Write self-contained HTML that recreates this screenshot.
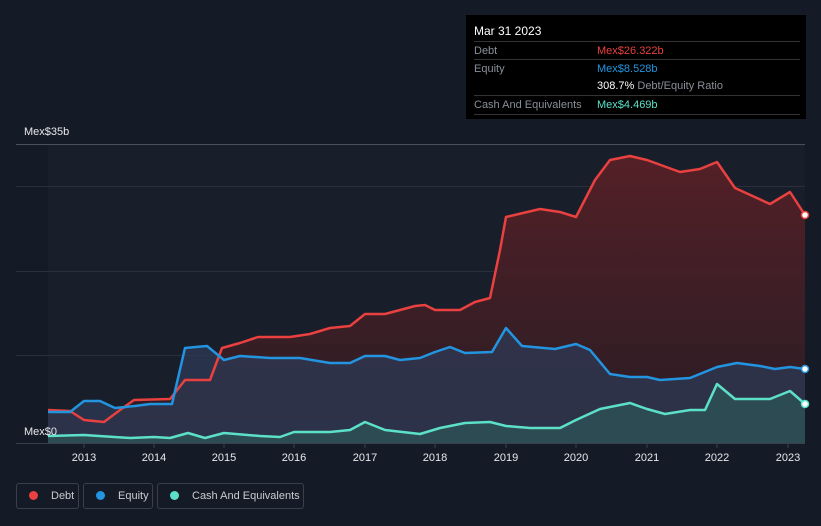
<!DOCTYPE html>
<html><head><meta charset="utf-8"><style>
html,body{margin:0;width:821px;height:526px;background:#151b26;font-family:"Liberation Sans",sans-serif;overflow:hidden;position:relative}
.tt{position:absolute;left:466px;top:15px;width:340px;height:104px;background:#000;color:#fff;font-size:11px}
.tt .r{position:absolute;left:8px;right:6px;border-top:1px solid #333;height:18px;line-height:18px;color:#8a8f98}
.leg{position:absolute;top:483px;height:26px;border:1px solid #3a404b;border-radius:3px;color:#c9ccd1;font-size:11px;line-height:24px;box-sizing:border-box;white-space:nowrap}
.leg i{display:inline-block;width:9px;height:9px;border-radius:50%;margin:0 13px 0 12px;vertical-align:-1px}
</style></head><body>
<svg width="821" height="526" style="position:absolute;left:0;top:0">
<defs>
<linearGradient id="gd" x1="0" y1="0" x2="0" y2="1"><stop offset="0" stop-color="#5a2026"/><stop offset="1" stop-color="#2a1c24"/></linearGradient>
</defs>
<rect x="48" y="144" width="757" height="299" fill="#181e2a"/>
<g stroke="#2a303b" stroke-width="1">
<line x1="16" y1="144.5" x2="805" y2="144.5" stroke="#4a505a"/>
<line x1="16" y1="186.5" x2="805" y2="186.5"/>
<line x1="16" y1="271.5" x2="805" y2="271.5"/>
<line x1="16" y1="355.5" x2="805" y2="355.5"/>
</g>
<path d="M48,410 L70,411 L84,420 L104,422 L120,410 L134,400 L170,399 L185,380 L210,380 L222,348 L240,343 L258,337 L290,337 L310,334 L330,328 L350,326 L365,314 L385,314 L415,306 L425,305 L435,310 L460,310 L475,302 L490,298 L500,250 L506,217 L540,209 L560,212 L576,217 L595,180 L610,160 L630,156 L647,160 L680,172 L700,169 L717,162 L735,188 L770,204 L790,192 L805,215 L805,443 L48,443Z" fill="url(#gd)" opacity=".9"/>
<path d="M48,412 L70,412 L84,401 L100,401 L115,408 L135,406 L150,404 L172,404 L185,348 L207,346 L224,360 L240,356 L270,358 L300,358 L330,363 L350,363 L365,356 L385,356 L400,360 L420,358 L435,352 L450,347 L465,353 L492,352 L506,328 L522,346 L555,349 L576,344 L590,350 L610,374 L630,377 L647,377 L660,380 L690,378 L717,367 L737,363 L760,366 L775,369 L790,367 L805,369 L805,443 L48,443Z" fill="#2d3a55" opacity=".75"/>
<path d="M48,436 L84,435 L130,438 L154,437 L170,438 L188,433 L205,438 L224,433 L260,436 L280,437 L294,432 L330,432 L350,430 L365,422 L385,430 L420,434 L440,428 L465,423 L490,422 L506,426 L530,428 L560,428 L576,420 L600,409 L630,403 L647,409 L665,414 L690,410 L705,410 L717,384 L735,399 L770,399 L790,391 L805,404 L805,443 L48,443Z" fill="#2d5557" opacity=".7"/>
<g fill="none" stroke-width="2.5" stroke-linejoin="round">
<path stroke="#e8413f" d="M48,410 L70,411 L84,420 L104,422 L120,410 L134,400 L170,399 L185,380 L210,380 L222,348 L240,343 L258,337 L290,337 L310,334 L330,328 L350,326 L365,314 L385,314 L415,306 L425,305 L435,310 L460,310 L475,302 L490,298 L500,250 L506,217 L540,209 L560,212 L576,217 L595,180 L610,160 L630,156 L647,160 L680,172 L700,169 L717,162 L735,188 L770,204 L790,192 L805,215"/>
<path stroke="#2394df" d="M48,412 L70,412 L84,401 L100,401 L115,408 L135,406 L150,404 L172,404 L185,348 L207,346 L224,360 L240,356 L270,358 L300,358 L330,363 L350,363 L365,356 L385,356 L400,360 L420,358 L435,352 L450,347 L465,353 L492,352 L506,328 L522,346 L555,349 L576,344 L590,350 L610,374 L630,377 L647,377 L660,380 L690,378 L717,367 L737,363 L760,366 L775,369 L790,367 L805,369"/>
<path stroke="#5de0c8" d="M48,436 L84,435 L130,438 L154,437 L170,438 L188,433 L205,438 L224,433 L260,436 L280,437 L294,432 L330,432 L350,430 L365,422 L385,430 L420,434 L440,428 L465,423 L490,422 L506,426 L530,428 L560,428 L576,420 L600,409 L630,403 L647,409 L665,414 L690,410 L705,410 L717,384 L735,399 L770,399 L790,391 L805,404"/>
</g>
<circle cx="805" cy="215" r="3.5" fill="#fff" stroke="#e8413f" stroke-width="1.5"/>
<circle cx="805" cy="369" r="3.5" fill="#fff" stroke="#2394df" stroke-width="1.5"/>
<circle cx="805" cy="404" r="3.5" fill="#fff" stroke="#5de0c8" stroke-width="1.5"/>
<line x1="16" y1="443.5" x2="805" y2="443.5" stroke="#3a404b"/>
<g stroke="#3a404b"><line x1="84" y1="443" x2="84" y2="448"/><line x1="154" y1="443" x2="154" y2="448"/><line x1="224" y1="443" x2="224" y2="448"/><line x1="294" y1="443" x2="294" y2="448"/><line x1="365" y1="443" x2="365" y2="448"/><line x1="435" y1="443" x2="435" y2="448"/><line x1="506" y1="443" x2="506" y2="448"/><line x1="576" y1="443" x2="576" y2="448"/><line x1="647" y1="443" x2="647" y2="448"/><line x1="717" y1="443" x2="717" y2="448"/><line x1="788" y1="443" x2="788" y2="448"/></g>
<g fill="#e6e8eb" font-size="11" text-anchor="middle" font-family="Liberation Sans">
<text x="84" y="461">2013</text><text x="154" y="461">2014</text><text x="224" y="461">2015</text><text x="294" y="461">2016</text><text x="365" y="461">2017</text><text x="435" y="461">2018</text><text x="506" y="461">2019</text><text x="576" y="461">2020</text><text x="647" y="461">2021</text><text x="717" y="461">2022</text><text x="788" y="461">2023</text>
</g>
<text x="24" y="135" fill="#e6e8eb" font-size="11">Mex$35b</text>
<text x="24" y="435" fill="#e6e8eb" font-size="11">Mex$0</text>
</svg>
<div class="tt">
<div style="position:absolute;left:8px;top:9px;font-size:12px">Mar 31 2023</div>
<div class="r" style="top:26px">Debt<span style="position:absolute;left:123px;color:#e8413f">Mex$26.322b</span></div>
<div class="r" style="top:44px">Equity<span style="position:absolute;left:123px;color:#2394df">Mex$8.528b</span></div>
<div style="position:absolute;left:131px;top:62px;line-height:18px;color:#8a8f98"><span style="color:#fff">308.7%</span> Debt/Equity Ratio</div>
<div class="r" style="top:80px;border-bottom:1px solid #333">Cash And Equivalents<span style="position:absolute;left:123px;color:#5de0c8">Mex$4.469b</span></div>
</div>
<div class="leg" style="left:16px;width:63px"><i style="background:#e8413f"></i>Debt</div>
<div class="leg" style="left:83px;width:70px"><i style="background:#2394df"></i>Equity</div>
<div class="leg" style="left:157px;width:147px"><i style="background:#5de0c8"></i>Cash And Equivalents</div>
</body></html>
